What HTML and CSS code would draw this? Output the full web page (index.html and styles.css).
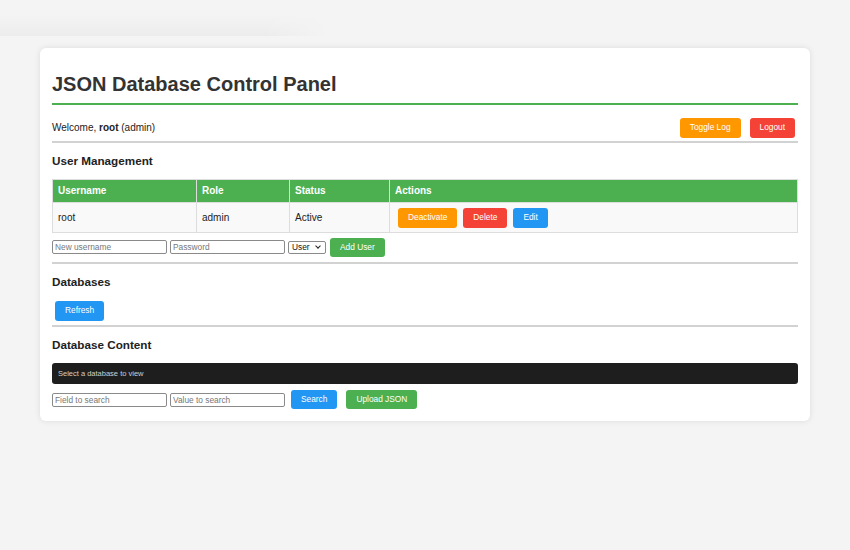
FILE: index.html
```html
<!DOCTYPE html>
<html>
<head>
<meta charset="utf-8" />
<title>JSON Database Control Panel</title>
<link rel="stylesheet" href="styles.css">
</head>
<body>

<div class="container">
  <h1>JSON Database Control Panel</h1>

  <div class="user-bar">
    <span>Welcome, <b>root</b> (admin)</span>
    <div class="user-actions">
      <button class="btn btn-orange">Toggle Log</button>
      <button class="btn btn-red">Logout</button>
    </div>
  </div>

  <section class="panel">
    <h3>User Management</h3>
    <table class="users">
      <thead>
        <tr>
          <th class="col-name">Username</th>
          <th class="col-role">Role</th>
          <th class="col-status">Status</th>
          <th>Actions</th>
        </tr>
      </thead>
      <tbody>
        <tr>
          <td>root</td>
          <td>admin</td>
          <td>Active</td>
          <td>
            <div class="row-actions">
              <button class="btn btn-orange">Deactivate</button>
              <button class="btn btn-red">Delete</button>
              <button class="btn btn-blue">Edit</button>
            </div>
          </td>
        </tr>
      </tbody>
    </table>
    <div class="form-row">
      <input type="text" placeholder="New username">
      <input type="password" placeholder="Password">
      <span class="select-wrap">
        <select>
          <option>User</option>
          <option>Admin</option>
        </select>
      </span>
      <button class="btn btn-green add-user">Add User</button>
    </div>
  </section>

  <section class="panel databases">
    <h3>Databases</h3>
    <div class="db-list">
      <button class="btn btn-blue">Refresh</button>
    </div>
  </section>

  <section class="panel last">
    <h3>Database Content</h3>
    <div class="db-view">Select a database to view</div>
    <div class="form-row search-row">
      <input type="text" placeholder="Field to search">
      <input type="text" placeholder="Value to search">
      <button class="btn btn-blue">Search</button>
      <button class="btn btn-green">Upload JSON</button>
    </div>
  </section>
</div>

</body>
</html>
```

FILE: styles.css
```css
html, body {
  margin: 0;
  padding: 0;
}
body {
  background: #f4f4f4;
  font-family: "Liberation Sans", Arial, sans-serif;
  font-size: 10px;
  color: #222;
  min-height: 550px;
  position: relative;
}
body::before {
  content: "";
  position: absolute;
  top: 0;
  left: 0;
  width: 330px;
  height: 36px;
  background: linear-gradient(to bottom, rgba(0,0,0,0) 40%, rgba(0,0,0,0.03));
  -webkit-mask-image: linear-gradient(to right, #000 80%, transparent);
}
.container {
  position: relative;
  width: 746px;
  margin: 48px auto 0;
  padding: 12px;
  background: #fff;
  border-radius: 6px;
  box-shadow: 0 0 6px rgba(0,0,0,0.1);
}
h1 {
  margin: 13px 0;
  padding-bottom: 7px;
  font-size: 20px;
  line-height: 23px;
  color: #333;
  border-bottom: 2px solid #4CAF50;
}
h3 {
  margin: 11px 0;
  font-size: 11.7px;
  line-height: 14px;
  color: #222;
}
.user-bar {
  display: flex;
  justify-content: space-between;
  align-items: center;
  padding-bottom: 3px;
}
.user-actions {
  display: flex;
  gap: 3px;
}
.panel {
  border-top: 2px solid #d2d2d2;
  padding-bottom: 5px;
}
.panel.databases {
  padding-bottom: 4px;
}
.panel.last {
  padding-bottom: 0;
}

.btn {
  font-family: "Liberation Sans", Arial, sans-serif;
  font-size: 8.33px;
  line-height: 9.6px;
  padding: 5px 10px;
  margin: 0 3px;
  border: none;
  border-radius: 3px;
  color: #fff;
  cursor: pointer;
}
.btn-orange { background: #ff9800; }
.btn-red { background: #f44336; }
.btn-blue { background: #2196F3; }
.btn-green { background: #4CAF50; }

table.users {
  width: 100%;
  border-collapse: collapse;
  font-size: 10px;
}
.users th, .users td {
  border: 1px solid #ddd;
  padding: 5px;
  text-align: left;
  line-height: 11.5px;
}
.users th {
  padding-bottom: 6px;
  background: #4CAF50;
  color: #fff;
  font-weight: bold;
}
.users td {
  padding-bottom: 4px;
  background: #f9f9f9;
}
.col-name { width: 133px; }
.col-role { width: 82px; }
.col-status { width: 89px; }
.row-actions {
  display: flex;
}

.form-row {
  display: flex;
  align-items: center;
  gap: 3px;
  margin-top: 5px;
}
.search-row {
  margin-top: 6px;
}
.form-row input {
  width: 115px;
  height: 14px;
  box-sizing: border-box;
  padding: 0 2px;
  margin: 0;
  border: 1px solid #8a8a8a;
  border-radius: 2px;
  font-family: "Liberation Sans", Arial, sans-serif;
  font-size: 8.33px;
}
.form-row input::placeholder {
  color: #777;
}
.form-row .add-user {
  margin-left: 1px;
}

/* select with a drawn chevron, the native arrow eats the label at this size */
.select-wrap {
  position: relative;
  display: inline-block;
}
.select-wrap select {
  -webkit-appearance: none;
  appearance: none;
  width: 38px;
  height: 13px;
  box-sizing: border-box;
  padding: 0 0 0 3px;
  margin: 0;
  border: 1px solid #8a8a8a;
  border-radius: 2px;
  background: #fff;
  color: #111;
  font-family: "Liberation Sans", Arial, sans-serif;
  font-size: 8.33px;
  line-height: 11px;
}
.select-wrap::after {
  content: "";
  position: absolute;
  right: 6px;
  top: 3px;
  width: 3px;
  height: 3px;
  border-right: 1.5px solid #222;
  border-bottom: 1.5px solid #222;
  transform: rotate(45deg);
  pointer-events: none;
}

.db-list {
  min-height: 19px;
  padding-top: 1px;
}
.db-view {
  background: #1e1e1e;
  color: #cfcfcf;
  font-size: 7.5px;
  line-height: 9px;
  padding: 6px;
  border-radius: 3px;
}
```
